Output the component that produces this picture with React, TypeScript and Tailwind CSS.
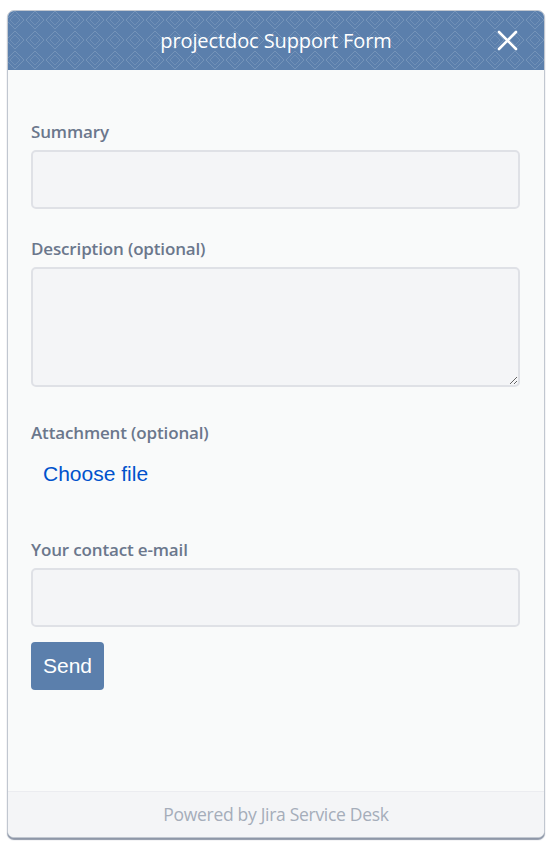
import React from 'react';

const labelFont = { fontFamily: '"Open Sans", "Noto Sans", sans-serif' };

function Field({ label, children }: { label: string; children: React.ReactNode }) {
  return (
    <div className="flex flex-col">
      <label className="text-[17px] font-semibold text-[#6b778c] leading-[20px] mb-[8px] tracking-[-0.15px]" style={labelFont}>
        {label}
      </label>
      {children}
    </div>
  );
}

export default function App() {
  return (
    <div className="w-[555px] h-[853px] bg-white pt-[10px] pl-[7px]">
      <div className="w-[538px] h-[828px] flex flex-col rounded-[7px] border border-[#c1c7d0] overflow-hidden shadow-[0_2px_1px_rgba(66,82,110,0.6)] bg-[#f9fafa]">
        {/* Header */}
        <div className="relative h-[59px] shrink-0 bg-[#5b7fac] flex items-center justify-center overflow-hidden">
          <svg className="absolute inset-0" width="100%" height="100%">
            <defs>
              <pattern id="dia" width="20" height="20" patternUnits="userSpaceOnUse" x="-3" y="-1">
                <path d="M10 1 L19 10 L10 19 L1 10 Z" fill="none" stroke="rgba(255,255,255,0.16)" strokeWidth="1" />
                <path d="M10 5 L15 10 L10 15 L5 10 Z" fill="none" stroke="rgba(255,255,255,0.12)" strokeWidth="1" />
              </pattern>
            </defs>
            <rect width="100%" height="100%" fill="url(#dia)" />
          </svg>
          <span className="relative text-white text-[20px] tracking-[-0.1px]" style={labelFont}>
            projectdoc Support Form
          </span>
          <svg className="absolute right-[26px] top-[19px]" width="21" height="21" viewBox="0 0 21 21" fill="none" stroke="white" strokeWidth="2.6" strokeLinecap="round">
            <path d="M2 2L19 19M19 2L2 19" />
          </svg>
        </div>

        {/* Body */}
        <div className="flex-1 flex flex-col pl-[23px] pr-[24px] pt-[52px]">
          <Field label="Summary">
            <input className="h-[59px] w-full rounded-[5px] border-2 border-[#dfe1e6] bg-[#f4f5f7] outline-none" />
          </Field>
          <div className="h-[30px]" />
          <Field label="Description (optional)">
            <textarea className="h-[120px] w-full rounded-[5px] border-2 border-[#dfe1e6] bg-[#f4f5f7] outline-none block" />
          </Field>
          <div className="h-[36px]" />
          <Field label="Attachment (optional)">
            <div className="pl-[12px] pt-[11px]">
              <span className="text-[21px] text-[#0052cc] leading-[24px]" style={{ fontFamily: '"Liberation Sans", Arial, sans-serif' }}>
                Choose file
              </span>
            </div>
          </Field>
          <div className="h-[53px]" />
          <Field label="Your contact e-mail">
            <input className="h-[59px] w-full rounded-[5px] border-2 border-[#dfe1e6] bg-[#f4f5f7] outline-none" />
          </Field>
          <div className="pt-[15px]">
            <button
              className="h-[48px] w-[73px] rounded-[4px] bg-[#5b7fac] text-white text-[21px]"
              style={{ fontFamily: '"Liberation Sans", Arial, sans-serif' }}
            >
              Send
            </button>
          </div>
        </div>

        {/* Footer */}
        <div className="h-[46px] shrink-0 border-t border-[#ebecf0] bg-[#f4f5f7] flex items-center justify-center">
          <span className="text-[17.5px] text-[#a5adba] tracking-[-0.3px]" style={labelFont}>
            Powered by Jira Service Desk
          </span>
        </div>
      </div>
    </div>
  );
}
